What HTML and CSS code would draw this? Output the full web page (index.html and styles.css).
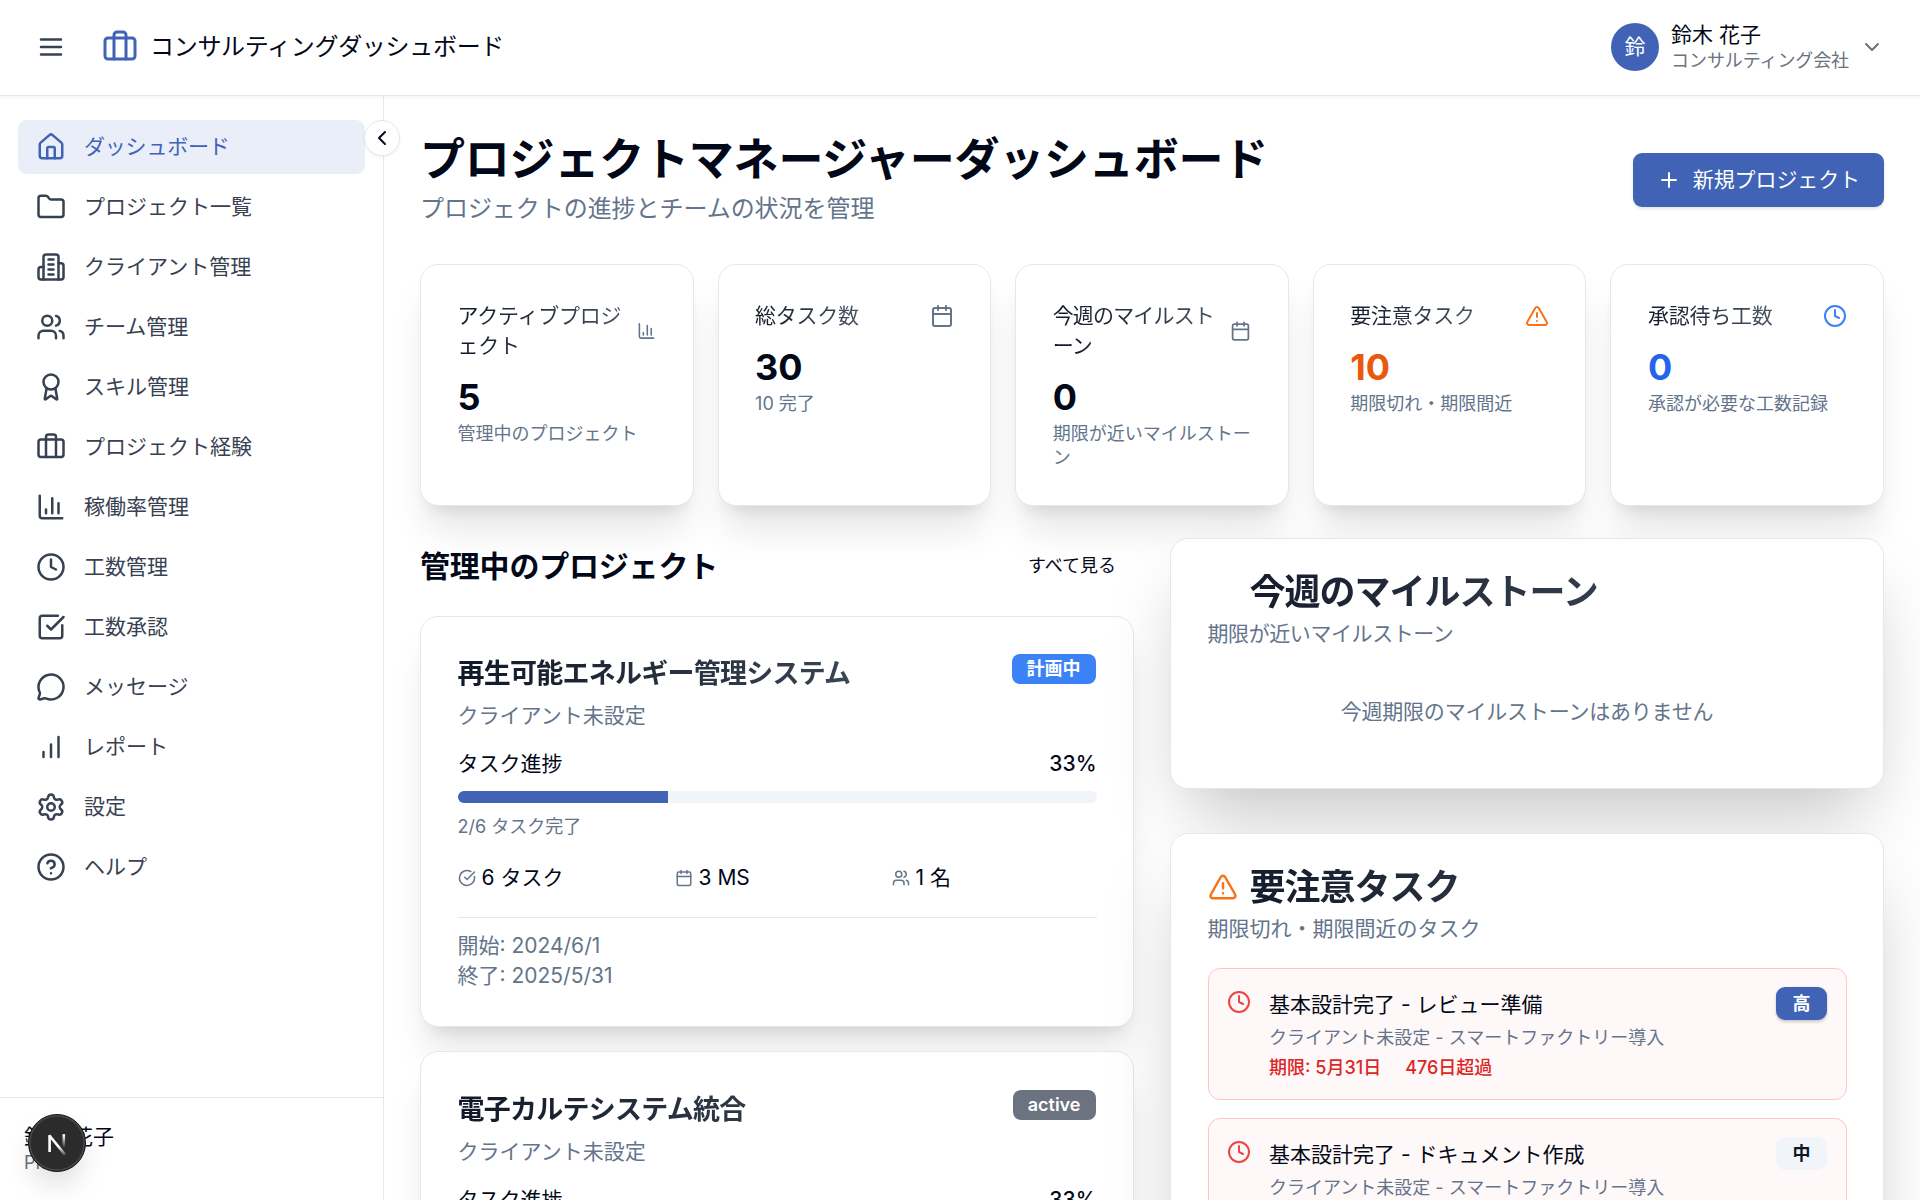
FILE: index.html
```html
<!DOCTYPE html>
<html lang="ja">
<head>
<meta charset="utf-8">
<title>コンサルティングダッシュボード</title>
<link rel="stylesheet" href="styles.css">
</head>
<body>
<svg class="sprite" aria-hidden="true">
  <symbol id="menu" viewBox="0 0 24 24"><path d="M4 6h16M4 12h16M4 18h16"/></symbol>
  <symbol id="briefcase" viewBox="0 0 24 24"><path d="M16 20V4a2 2 0 0 0-2-2h-4a2 2 0 0 0-2 2v16"/><rect width="20" height="14" x="2" y="6" rx="2"/></symbol>
  <symbol id="chevron-down" viewBox="0 0 24 24"><path d="m6 9 6 6 6-6"/></symbol>
  <symbol id="chevron-left" viewBox="0 0 24 24"><path d="m15 18-6-6 6-6"/></symbol>
  <symbol id="house" viewBox="0 0 24 24"><path d="M15 21v-8a1 1 0 0 0-1-1h-4a1 1 0 0 0-1 1v8"/><path d="M3 10a2 2 0 0 1 .709-1.528l7-5.999a2 2 0 0 1 2.582 0l7 5.999A2 2 0 0 1 21 10v9a2 2 0 0 1-2 2H5a2 2 0 0 1-2-2z"/></symbol>
  <symbol id="folder" viewBox="0 0 24 24"><path d="M20 20a2 2 0 0 0 2-2V8a2 2 0 0 0-2-2h-7.9a2 2 0 0 1-1.69-.9L9.6 3.9A2 2 0 0 0 7.93 3H4a2 2 0 0 0-2 2v13a2 2 0 0 0 2 2Z"/></symbol>
  <symbol id="building" viewBox="0 0 24 24"><path d="M6 22V4a2 2 0 0 1 2-2h8a2 2 0 0 1 2 2v18Z"/><path d="M6 12H4a2 2 0 0 0-2 2v6a2 2 0 0 0 2 2h2"/><path d="M18 9h2a2 2 0 0 1 2 2v9a2 2 0 0 1-2 2h-2"/><path d="M10 6h4M10 10h4M10 14h4M10 18h4"/></symbol>
  <symbol id="users" viewBox="0 0 24 24"><path d="M16 21v-2a4 4 0 0 0-4-4H6a4 4 0 0 0-4 4v2"/><circle cx="9" cy="7" r="4"/><path d="M22 21v-2a4 4 0 0 0-3-3.87"/><path d="M16 3.13a4 4 0 0 1 0 7.75"/></symbol>
  <symbol id="award" viewBox="0 0 24 24"><path d="m15.477 12.89 1.515 8.526a.5.5 0 0 1-.81.47l-3.58-2.687a1 1 0 0 0-1.197 0l-3.586 2.686a.5.5 0 0 1-.81-.469l1.514-8.526"/><circle cx="12" cy="8" r="6"/></symbol>
  <symbol id="chart" viewBox="0 0 24 24"><path d="M3 3v16a2 2 0 0 0 2 2h16"/><path d="M18 17V9M13 17V5M8 17v-3"/></symbol>
  <symbol id="clock" viewBox="0 0 24 24"><circle cx="12" cy="12" r="10"/><path d="M12 6v6l4 2"/></symbol>
  <symbol id="check-square" viewBox="0 0 24 24"><path d="M21 10.5V19a2 2 0 0 1-2 2H5a2 2 0 0 1-2-2V5a2 2 0 0 1 2-2h12.5"/><path d="m9 11 3 3L22 4"/></symbol>
  <symbol id="message" viewBox="0 0 24 24"><path d="M2.992 16.342a2 2 0 0 1 .094 1.167l-1.065 3.29a1 1 0 0 0 1.236 1.168l3.413-.998a2 2 0 0 1 1.099.092 10 10 0 1 0-4.777-4.719"/></symbol>
  <symbol id="bars" viewBox="0 0 24 24"><path d="M12 20V10M18 20V4M6 20v-4"/></symbol>
  <symbol id="settings" viewBox="0 0 24 24"><path d="M9.671 4.136a2.34 2.34 0 0 1 4.659 0 2.34 2.34 0 0 0 3.319 1.915 2.34 2.34 0 0 1 2.33 4.033 2.34 2.34 0 0 0 0 3.831 2.34 2.34 0 0 1-2.33 4.033 2.34 2.34 0 0 0-3.319 1.915 2.34 2.34 0 0 1-4.659 0 2.34 2.34 0 0 0-3.32-1.915 2.34 2.34 0 0 1-2.33-4.033 2.34 2.34 0 0 0 0-3.831A2.34 2.34 0 0 1 6.35 6.051a2.34 2.34 0 0 0 3.319-1.915"/><circle cx="12" cy="12" r="3"/></symbol>
  <symbol id="help" viewBox="0 0 24 24"><circle cx="12" cy="12" r="10"/><path d="M9.09 9a3 3 0 0 1 5.83 1c0 2-3 3-3 3M12 17h.01"/></symbol>
  <symbol id="plus" viewBox="0 0 24 24"><path d="M5 12h14M12 5v14"/></symbol>
  <symbol id="calendar" viewBox="0 0 24 24"><path d="M8 2v4M16 2v4"/><rect width="18" height="18" x="3" y="4" rx="2"/><path d="M3 10h18"/></symbol>
  <symbol id="warning" viewBox="0 0 24 24"><path d="m21.73 18-8-14a2 2 0 0 0-3.48 0l-8 14A2 2 0 0 0 4 21h16a2 2 0 0 0 1.73-3"/><path d="M12 9v4M12 17h.01"/></symbol>
  <symbol id="check-circle" viewBox="0 0 24 24"><path d="M21.801 10A10 10 0 1 1 17 3.335"/><path d="m9 11 3 3L22 4"/></symbol>
</svg>

<header class="topbar">
  <svg class="icon icon-20 menu"><use href="#menu"/></svg>
  <div class="brand">
    <svg class="icon icon-brand"><use href="#briefcase"/></svg>
    <span>コンサルティングダッシュボード</span>
  </div>
  <div class="account">
    <div class="avatar">鈴</div>
    <div class="account-text">
      <div class="account-name">鈴木 花子</div>
      <div class="account-org">コンサルティング会社</div>
    </div>
    <svg class="icon icon-16 muted"><use href="#chevron-down"/></svg>
  </div>
</header>

<div class="shell">
  <aside class="sidebar">
    <nav class="nav">
      <a class="nav-item active"><svg class="icon icon-20"><use href="#house"/></svg>ダッシュボード</a>
      <a class="nav-item"><svg class="icon icon-20"><use href="#folder"/></svg>プロジェクト一覧</a>
      <a class="nav-item"><svg class="icon icon-20"><use href="#building"/></svg>クライアント管理</a>
      <a class="nav-item"><svg class="icon icon-20"><use href="#users"/></svg>チーム管理</a>
      <a class="nav-item"><svg class="icon icon-20"><use href="#award"/></svg>スキル管理</a>
      <a class="nav-item"><svg class="icon icon-20"><use href="#briefcase"/></svg>プロジェクト経験</a>
      <a class="nav-item"><svg class="icon icon-20"><use href="#chart"/></svg>稼働率管理</a>
      <a class="nav-item"><svg class="icon icon-20"><use href="#clock"/></svg>工数管理</a>
      <a class="nav-item"><svg class="icon icon-20"><use href="#check-square"/></svg>工数承認</a>
      <a class="nav-item"><svg class="icon icon-20"><use href="#message"/></svg>メッセージ</a>
      <a class="nav-item"><svg class="icon icon-20"><use href="#bars"/></svg>レポート</a>
      <a class="nav-item"><svg class="icon icon-20"><use href="#settings"/></svg>設定</a>
      <a class="nav-item"><svg class="icon icon-20"><use href="#help"/></svg>ヘルプ</a>
    </nav>
    <div class="sidebar-user">
      <div class="account-name">鈴木 花子</div>
      <div class="account-org">PM</div>
    </div>
    <button class="collapse"><svg class="icon icon-16"><use href="#chevron-left"/></svg></button>
    <div class="dev-badge">
      <svg viewBox="0 0 40 40">
        <defs>
          <linearGradient id="diag" x1="24" y1="22" x2="31" y2="33" gradientUnits="userSpaceOnUse"><stop stop-color="#fff"/><stop offset="1" stop-color="#fff" stop-opacity="0"/></linearGradient>
          <linearGradient id="stem" x1="27" y1="12" x2="27" y2="25" gradientUnits="userSpaceOnUse"><stop stop-color="#fff"/><stop offset="1" stop-color="#fff" stop-opacity="0"/></linearGradient>
        </defs>
        <path d="M12.6 29V12.2" stroke="#fff"/>
        <path d="M12.2 12.2 28 31.6" stroke="url(#diag)"/>
        <path d="M26.8 11.2v13" stroke="url(#stem)"/>
      </svg>
    </div>
  </aside>

  <main class="main">
    <div class="page-head">
      <div>
        <h1>プロジェクトマネージャーダッシュボード</h1>
        <p class="lead">プロジェクトの進捗とチームの状況を管理</p>
      </div>
      <button class="primary"><svg class="icon icon-16"><use href="#plus"/></svg>新規プロジェクト</button>
    </div>

    <section class="stats">
      <div class="card stat">
        <div class="stat-head"><h3>アクティブプロジェクト</h3><svg class="icon squeeze-a"><use href="#chart"/></svg></div>
        <div class="stat-value">5</div>
        <p>管理中のプロジェクト</p>
      </div>
      <div class="card stat">
        <div class="stat-head"><h3>総タスク数</h3><svg class="icon icon-16"><use href="#calendar"/></svg></div>
        <div class="stat-value">30</div>
        <p>10 完了</p>
      </div>
      <div class="card stat">
        <div class="stat-head"><h3 class="tight">今週のマイルストーン</h3><svg class="icon squeeze-b"><use href="#calendar"/></svg></div>
        <div class="stat-value">0</div>
        <p>期限が近いマイルストーン</p>
      </div>
      <div class="card stat">
        <div class="stat-head"><h3>要注意タスク</h3><svg class="icon icon-16 orange"><use href="#warning"/></svg></div>
        <div class="stat-value value-orange">10</div>
        <p>期限切れ・期限間近</p>
      </div>
      <div class="card stat">
        <div class="stat-head"><h3>承認待ち工数</h3><svg class="icon icon-16 blue"><use href="#clock"/></svg></div>
        <div class="stat-value value-blue">0</div>
        <p>承認が必要な工数記録</p>
      </div>
    </section>

    <div class="columns">
      <section class="projects">
        <div class="section-head"><h2>管理中のプロジェクト</h2><button class="ghost">すべて見る</button></div>
        <article class="card project">
          <div class="project-head">
            <div class="project-title"><h3>再生可能エネルギー管理システム</h3><p>クライアント未設定</p></div>
            <span class="badge planning">計画中</span>
          </div>
          <div class="progress-label"><span>タスク進捗</span><b>33%</b></div>
          <div class="track"><div class="fill" style="width:33%"></div></div>
          <p class="done">2/6 タスク完了</p>
          <div class="facts">
            <span><svg class="icon icon-12"><use href="#check-circle"/></svg>6 タスク</span>
            <span><svg class="icon icon-12"><use href="#calendar"/></svg>3 MS</span>
            <span><svg class="icon icon-12"><use href="#users"/></svg>1 名</span>
          </div>
          <div class="dates"><div>開始: 2024/6/1</div><div>終了: 2025/5/31</div></div>
        </article>
        <article class="card project">
          <div class="project-head">
            <div class="project-title"><h3>電子カルテシステム統合</h3><p>クライアント未設定</p></div>
            <span class="badge active-state">active</span>
          </div>
          <div class="progress-label"><span>タスク進捗</span><b>33%</b></div>
          <div class="track"><div class="fill" style="width:33%"></div></div>
        </article>
      </section>

      <section class="side">
        <div class="card panel">
          <h3 class="panel-title"><span class="icon-space"></span>今週のマイルストーン</h3>
          <p class="panel-desc tight">期限が近いマイルストーン</p>
          <p class="empty">今週期限のマイルストーンはありません</p>
        </div>
        <div class="card panel">
          <h3 class="panel-title"><svg class="icon icon-20 orange"><use href="#warning"/></svg>要注意タスク</h3>
          <p class="panel-desc">期限切れ・期限間近のタスク</p>
          <div class="alerts">
            <div class="alert">
              <svg class="icon icon-16 red"><use href="#clock"/></svg>
              <div class="alert-body">
                <div class="alert-title">基本設計完了 - レビュー準備</div>
                <div class="alert-sub">クライアント未設定 - スマートファクトリー導入</div>
                <div class="alert-due"><span>期限: 5月31日</span><span>476日超過</span></div>
              </div>
              <span class="priority high">高</span>
            </div>
            <div class="alert">
              <svg class="icon icon-16 red"><use href="#clock"/></svg>
              <div class="alert-body">
                <div class="alert-title">基本設計完了 - ドキュメント作成</div>
                <div class="alert-sub">クライアント未設定 - スマートファクトリー導入</div>
              </div>
              <span class="priority mid">中</span>
            </div>
          </div>
        </div>
      </section>
    </div>
  </main>
</div>
</body>
</html>
```
FILE: styles.css
```css
* { box-sizing: border-box; margin: 0; padding: 0; }

html, body { height: 1200px; overflow: hidden; }

body {
  display: flex;
  flex-direction: column;
  background: #fff;
  color: #020817;
  font-family: Inter, "Noto Sans CJK JP", sans-serif;
  font-size: 21px;
  line-height: 30px;
}

button { font: inherit; border: 0; background: none; color: inherit; }

.sprite { display: none; }

.icon {
  flex: none;
  width: 24px;
  height: 24px;
  fill: none;
  stroke: currentColor;
  stroke-width: 2;
  stroke-linecap: round;
  stroke-linejoin: round;
}
.icon-12 { width: 18px; height: 18px; }
.icon-20 { width: 30px; height: 30px; }
.icon-brand { width: 36px; height: 36px; color: #4063b5; }
.muted { color: #6b7280; }
.orange { color: #f97316; }
.blue { color: #3b82f6; }
.red { color: #ef4444; }
.tight { letter-spacing: -.02em; }

/* Top bar */
.topbar {
  position: relative;
  z-index: 2;
  flex: none;
  display: flex;
  align-items: center;
  height: 96px;
  padding: 0 36px 1px;
  background: #fff;
  border-bottom: 1px solid #e2e8f0;
  box-shadow: 0 1.5px 3px rgba(0, 0, 0, .05);
}
.menu { color: #374151; }
.brand { display: flex; align-items: center; gap: 12px; margin-left: 36px; font-size: 24px; letter-spacing: -.3px; }
.account { display: flex; align-items: center; gap: 12px; margin-left: auto; }
.account-text { margin-right: -1px; }
.avatar {
  display: flex;
  align-items: center;
  justify-content: center;
  width: 48px;
  height: 48px;
  border-radius: 50%;
  background: #4063b5;
  color: #fff;
}
.account-name { font-size: 21px; line-height: 28px; }
.account-org { font-size: 18px; line-height: 24px; letter-spacing: -.1px; color: #6b7280; }

/* Sidebar */
.shell { flex: 1; display: flex; min-height: 0; }
.sidebar {
  position: relative;
  flex: none;
  display: flex;
  flex-direction: column;
  width: 384px;
  border-right: 1px solid #e2e8f0;
}
.nav { flex: 1; display: flex; flex-direction: column; gap: 6px; padding: 24px 18px; }
.nav-item {
  display: flex;
  align-items: center;
  gap: 18px;
  height: 54px;
  padding: 0 18px;
  border-radius: 9px;
  color: #374151;
}
.nav-item.active { background: #eaeef8; color: #4063b5; letter-spacing: -.2px; }
.sidebar-user { height: 103px; padding: 25px 24px; border-top: 1px solid #e2e8f0; }
.collapse {
  position: absolute;
  top: 24px;
  right: -17px;
  display: flex;
  align-items: center;
  justify-content: center;
  width: 36px;
  height: 36px;
  border: 1px solid #e2e8f0;
  border-radius: 50%;
  background: #fff;
  box-shadow: 0 1.5px 3px rgba(0, 0, 0, .05);
}
.dev-badge {
  position: absolute;
  left: 28px;
  bottom: 28px;
  width: 58px;
  height: 58px;
  padding: 8px;
  border: 1px solid #171717;
  border-radius: 50%;
  background: #2b2b2b;
  box-shadow: inset 0 0 0 1.5px #4b4b4b, 0 16px 32px -8px rgba(0, 0, 0, .2);
}
.dev-badge svg { display: block; width: 40px; height: 40px; fill: none; stroke-width: 2.6; }

/* Page heading */
.main { flex: 1; min-width: 0; padding: 36px; }
.page-head { display: flex; align-items: center; justify-content: space-between; }
h1 { padding-top: 1px; font-size: 45px; line-height: 54px; font-weight: 700; letter-spacing: -.2px; }
.lead { margin-top: 3px; font-size: 24px; line-height: 38px; letter-spacing: -.05px; color: #64748b; }
.primary {
  display: flex;
  align-items: center;
  gap: 12px;
  height: 54px;
  padding: 0 24px;
  border-radius: 9px;
  background: #4063b5;
  color: #fff;
  letter-spacing: -.1px;
  box-shadow: 0 1.5px 3px rgba(0, 0, 0, .1);
}

/* Cards */
.card {
  border: 1px solid #e2e8f0;
  border-radius: 18px;
  background: #fff;
  padding: 36px 36.5px;
  box-shadow: 0 30px 37.5px -7.5px rgba(0, 0, 0, .1), 0 12px 15px -9px rgba(0, 0, 0, .1);
}
.card h3 {
  background: linear-gradient(90deg, #111827, #4b5563);
  -webkit-background-clip: text;
  background-clip: text;
  color: transparent;
}

.stats { display: grid; grid-template-columns: repeat(5, 1fr); gap: 24px; margin-top: 36px; }
.stat { height: 242px; }
.stat-head { display: flex; align-items: center; justify-content: space-between; color: #64748b; }
.stat-head h3 { font-size: 21px; font-weight: 400; letter-spacing: -.25px; }
.stat-head h3.tight { letter-spacing: -.04em; }
.stat-value { margin-top: 12px; font-size: 36px; line-height: 48px; font-weight: 700; }
.stat p { padding-top: 1px; font-size: 18px; line-height: 24px; color: #64748b; }
.value-orange { color: #ea580c; }
.value-blue { color: #2563eb; }
.stat-head .orange { color: #f97316; }
.stat-head .blue { color: #3b82f6; }
.squeeze-a { width: 19px; }
.squeeze-b { width: 21px; }

.columns { display: grid; grid-template-columns: 1fr 1fr; gap: 36px; align-items: start; margin-top: 31.5px; }

/* Projects */
.projects { display: flex; flex-direction: column; gap: 24px; }
.section-head { display: flex; align-items: center; justify-content: space-between; height: 54px; padding-top: 2px; }
h2 { font-size: 30px; line-height: 42px; font-weight: 700; letter-spacing: -.2px; }
.ghost { padding: 0 18px; font-size: 18px; }
.project { padding-top: 37px; padding-bottom: 35.5px; }
.project + .project { padding-top: 38px; }
.project-head { display: flex; align-items: flex-start; justify-content: space-between; gap: 12px; }
.project-head h3 { font-size: 27px; line-height: 40px; letter-spacing: -.028em; font-weight: 700; }
.project-title { flex: 1; }
.project-title p { margin-top: 7px; color: #64748b; }
.badge {
  margin-right: 1px;
  padding: 0 15px;
  border-radius: 8px;
  font-size: 18px;
  line-height: 30px;
  font-weight: 600;
  color: #fff;
}
.planning { background: #3b82f6; }
.active-state { background: #6b7280; }
.progress-label { display: flex; justify-content: space-between; margin-top: 18px; }
.progress-label b { font-weight: 500; }
.track { height: 12px; margin-top: 12px; border-radius: 6px; overflow: hidden; background: #f1f5f9; }
.fill { height: 100%; background: #4063b5; }
.done { margin-top: 12px; font-size: 18px; line-height: 24px; color: #64748b; }
.facts { display: grid; grid-template-columns: repeat(3, 1fr); gap: 12px; margin-top: 24px; }
.facts span { display: flex; align-items: center; gap: 6px; }
.facts .icon { color: #64748b; }
.dates { margin-top: 24px; padding-top: 13px; border-top: 1px solid #e2e8f0; color: #64748b; }

/* Side panels */
.side { display: flex; flex-direction: column; gap: 44px; }
.panel { padding-top: 35px; box-shadow: 0 37.5px 75px -18px rgba(0, 0, 0, .25); }
.panel-title {
  display: flex;
  align-items: center;
  gap: 12px;
  font-size: 36px;
  line-height: 36px;
  letter-spacing: -.028em;
  font-weight: 700;
}
.icon-space { width: 30px; height: 30px; }
.panel-desc { margin-top: 9px; color: #64748b; }
.empty { padding: 48px 0 25px; text-align: center; letter-spacing: -.2px; color: #64748b; }
.alerts { display: flex; flex-direction: column; gap: 18px; margin-top: 24px; }
.alert {
  display: flex;
  align-items: flex-start;
  gap: 18px;
  height: 132px;
  padding: 18px 18.5px;
  border: 1px solid #fdc5c5;
  border-radius: 12px;
  background: #fff8f8;
}
.alert > .icon { margin-top: 3px; }
.alert-body { flex: 1; }
.alert-title { line-height: 36px; }
.alert-sub { margin-top: 3px; font-size: 18px; line-height: 24px; color: #64748b; }
.alert-due { display: flex; gap: 24px; margin-top: 6px; font-size: 18px; line-height: 24px; font-weight: 500; color: #dc2626; }
.priority { width: 51px; border-radius: 9px; font-size: 18px; line-height: 33px; font-weight: 700; text-align: center; }
.high { background: #4063b5; color: #fff; box-shadow: 0 1.5px 3px rgba(0, 0, 0, .2); }
.mid { background: #f1f5f9; color: #0f172a; }
```
